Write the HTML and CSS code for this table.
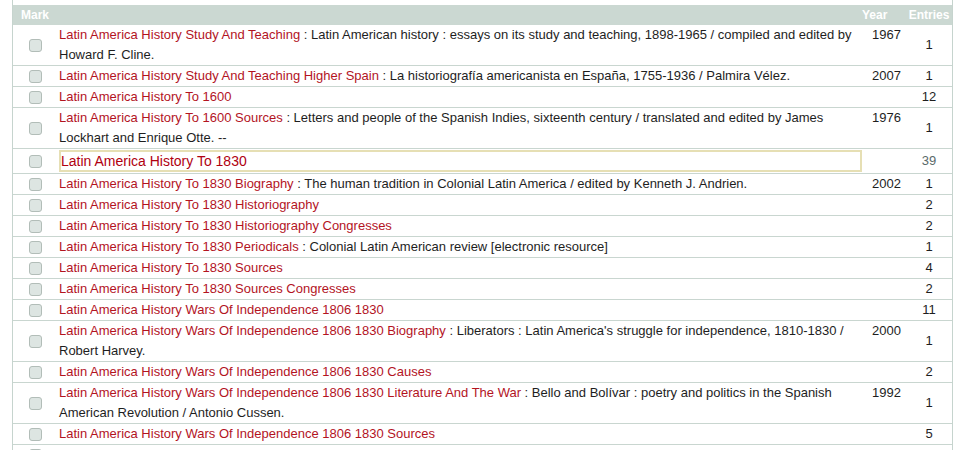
FILE: index.html
```html
<!DOCTYPE html>
<html>
<head>
<meta charset="utf-8">
<link rel="stylesheet" href="styles.css">
</head>
<body>
<div class="wrap">
<table class="list">
  <colgroup>
    <col class="c-mark"><col class="c-text"><col class="c-year"><col class="c-ent">
  </colgroup>
  <thead>
    <tr><th class="h-mark">Mark</th><th></th><th class="h-year">Year</th><th class="h-ent">Entries</th></tr>
  </thead>
  <tbody>
    <tr><td class="mark"><input type="checkbox"></td><td class="txt"><a>Latin America History Study And Teaching</a> : Latin American history : essays on its study and teaching, 1898-1965 / compiled and edited by Howard F. Cline.</td><td class="yr">1967</td><td class="ent">1</td></tr>
    <tr><td class="mark"><input type="checkbox"></td><td class="txt"><a>Latin America History Study And Teaching Higher Spain</a> : La historiografía americanista en España, 1755-1936 / Palmira Vélez.</td><td class="yr">2007</td><td class="ent">1</td></tr>
    <tr><td class="mark"><input type="checkbox"></td><td class="txt"><a>Latin America History To 1600</a></td><td class="yr"></td><td class="ent">12</td></tr>
    <tr><td class="mark"><input type="checkbox"></td><td class="txt"><a>Latin America History To 1600 Sources</a> : Letters and people of the Spanish Indies, sixteenth century / translated and edited by James Lockhart and Enrique Otte. --</td><td class="yr">1976</td><td class="ent">1</td></tr>
    <tr class="hl"><td class="mark"><input type="checkbox"></td><td class="txt" colspan="2"><div class="hlbox"><a>Latin America History To 1830</a></div></td><td class="ent dim">39</td></tr>
    <tr><td class="mark"><input type="checkbox"></td><td class="txt"><a>Latin America History To 1830 Biography</a> : The human tradition in Colonial Latin America / edited by Kenneth J. Andrien.</td><td class="yr">2002</td><td class="ent">1</td></tr>
    <tr><td class="mark"><input type="checkbox"></td><td class="txt"><a>Latin America History To 1830 Historiography</a></td><td class="yr"></td><td class="ent">2</td></tr>
    <tr><td class="mark"><input type="checkbox"></td><td class="txt"><a>Latin America History To 1830 Historiography Congresses</a></td><td class="yr"></td><td class="ent">2</td></tr>
    <tr><td class="mark"><input type="checkbox"></td><td class="txt"><a>Latin America History To 1830 Periodicals</a> : Colonial Latin American review [electronic resource]</td><td class="yr"></td><td class="ent">1</td></tr>
    <tr><td class="mark"><input type="checkbox"></td><td class="txt"><a>Latin America History To 1830 Sources</a></td><td class="yr"></td><td class="ent">4</td></tr>
    <tr><td class="mark"><input type="checkbox"></td><td class="txt"><a>Latin America History To 1830 Sources Congresses</a></td><td class="yr"></td><td class="ent">2</td></tr>
    <tr><td class="mark"><input type="checkbox"></td><td class="txt"><a>Latin America History Wars Of Independence 1806 1830</a></td><td class="yr"></td><td class="ent">11</td></tr>
    <tr><td class="mark"><input type="checkbox"></td><td class="txt"><a>Latin America History Wars Of Independence 1806 1830 Biography</a> : Liberators : Latin America's struggle for independence, 1810-1830 / Robert Harvey.</td><td class="yr">2000</td><td class="ent">1</td></tr>
    <tr><td class="mark"><input type="checkbox"></td><td class="txt"><a>Latin America History Wars Of Independence 1806 1830 Causes</a></td><td class="yr"></td><td class="ent">2</td></tr>
    <tr><td class="mark"><input type="checkbox"></td><td class="txt"><a>Latin America History Wars Of Independence 1806 1830 Literature And The War</a> : Bello and Bolívar : poetry and politics in the Spanish American Revolution / Antonio Cussen.</td><td class="yr">1992</td><td class="ent">1</td></tr>
    <tr><td class="mark"><input type="checkbox"></td><td class="txt"><a>Latin America History Wars Of Independence 1806 1830 Sources</a></td><td class="yr"></td><td class="ent">5</td></tr>
    <tr><td class="mark"><input type="checkbox"></td><td class="txt"><a>Latin America Intellectual Life Congresses</a> : Latin American thought and the literature of modernity / edited by</td><td class="yr">1995</td><td class="ent">1</td></tr>
  </tbody>
</table>
</div>
</body>
</html>
```
FILE: styles.css
```css
html, body {
  margin: 0;
  padding: 0;
  background: #fff;
}
body {
  font-family: "Liberation Sans", Arial, sans-serif;
  font-size: 13px;
  color: #1e1e1e;
  overflow: hidden;
}
.wrap {
  margin: 0 12px;
  padding-top: 5px;
  border-left: 1px solid #c6d4ce;
  border-right: 1px solid #c6d4ce;
  min-height: 450px;
  box-sizing: border-box;
}
.list {
  width: 100%;
  border-collapse: collapse;
  table-layout: fixed;
}
.c-mark { width: 44px; }
.c-year { width: 47px; }
.c-ent { width: 46px; }
thead tr {
  background: #cbd8d2;
}
th {
  color: #fff;
  font-weight: bold;
  font-size: 12px;
  text-align: left;
  height: 20px;
  padding: 0;
  line-height: 20px;
  vertical-align: middle;
}
.h-mark { padding-left: 8px; }
.h-year { padding-left: 3px; }
.h-ent { text-align: center; }
tbody tr {
  border-bottom: 1px solid #c9d6d0;
}
td {
  padding: 0;
  line-height: 20px;
  vertical-align: top;
}
td.mark {
  text-align: center;
  vertical-align: middle;
}
td.mark input {
  -webkit-appearance: none;
  appearance: none;
  display: block;
  margin: 0 auto;
  width: 13px;
  height: 13px;
  border: 1px solid #b2bdb8;
  border-radius: 3px;
  background: #dde5e2;
  box-sizing: border-box;
}
td.txt {
  padding-left: 2px;
  padding-right: 2px;
}
td.txt a {
  color: #b3141f;
  text-decoration: none;
}
td.yr {
  padding-left: 13px;
}
td.ent {
  text-align: center;
  vertical-align: middle;
}
td.ent.dim {
  color: #5a6a6a;
}
tr.hl td {
  height: 24px;
}
tr.hl td.txt {
  padding-right: 44px;
  vertical-align: middle;
}
.hlbox {
  border: 2px solid #e6dfb4;
  line-height: 18px;
  font-size: 14px;
  padding-left: 0;
}
.hlbox a {
  color: #b00010 !important;
}
```
